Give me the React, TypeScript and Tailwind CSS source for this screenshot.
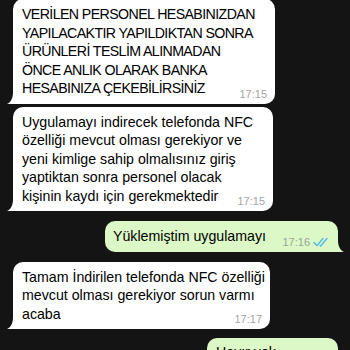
type Msg = {
  lines: string[];
  time: string;
  width: string;
  caps?: boolean;
};

function TailLeft() {
  return (
    <svg className="absolute left-[-6px] bottom-0" width="12" height="12" viewBox="0 0 12 12">
      <path d="M6 0 C6 6 4 10 0 12 L12 12 L12 0 Z" fill="#ffffff" />
    </svg>
  );
}

function TailRight() {
  return (
    <svg className="absolute right-[-6px] bottom-0" width="12" height="12" viewBox="0 0 12 12">
      <path d="M6 0 C6 6 8 10 12 12 L0 12 L0 0 Z" fill="#dcf8c6" />
    </svg>
  );
}

function Ticks() {
  return (
    <svg width="15" height="10" viewBox="0 0 15 10" fill="none" stroke="#4fb6ec" strokeWidth="1.3" strokeLinecap="round" strokeLinejoin="round">
      <path d="M1 5.5 L4 8.5 L10 1.5" />
      <path d="M7 8.5 L7.6 9 L14 1.5" />
    </svg>
  );
}

function Incoming({ msg, className }: { msg: Msg; className?: string }) {
  const last = msg.lines.length - 1;
  return (
    <div className={`relative self-start bg-white rounded-[10px] rounded-bl-[3px] pl-[9px] pr-[8px] py-[6px] ${msg.width} ${className ?? ""}`}>
      <TailLeft />
      <div className={`text-[14.2px] leading-[18.5px] text-black ${msg.caps ? "tracking-[-0.6px]" : ""}`}>
        {msg.lines.map((line, i) =>
          i === last ? (
            <div key={i} className="flex items-end justify-between whitespace-nowrap">
              <span>{line}</span>
              <span className="text-[11px] leading-[12px] mb-[-2px] text-[#a3a3a3] tracking-normal">{msg.time}</span>
            </div>
          ) : (
            <div key={i} className="whitespace-nowrap">
              {line}
            </div>
          )
        )}
      </div>
    </div>
  );
}

export default function App() {
  return (
    <div
      className="w-[350px] h-[350px] overflow-hidden bg-[#141414] flex flex-col pl-[13px] pr-[12px]"
      style={{ fontFamily: '"Liberation Sans", Arial, sans-serif' }}
    >
      {/* first bubble, top edge cut off by the screenshot */}
      <Incoming
        className="-mt-[1px]"
        msg={{
          caps: true,
          width: "w-[262px]",
          time: "17:15",
          lines: [
            "VERİLEN PERSONEL HESABINIZDAN",
            "YAPILACAKTIR YAPILDIKTAN SONRA",
            "ÜRÜNLERİ TESLİM ALINMADAN",
            "ÖNCE ANLIK OLARAK BANKA",
            "HESABINIZA ÇEKEBİLİRSİNİZ",
          ],
        }}
      />

      <Incoming
        className="mt-[3px]"
        msg={{
          width: "w-[260px]",
          time: "17:15",
          lines: [
            "Uygulamayı indirecek telefonda NFC",
            "özelliği mevcut olması gerekiyor ve",
            "yeni kimlige sahip olmalısınız giriş",
            "yaptiktan sonra personel olacak",
            "kişinin kaydı için gerekmektedir",
          ],
        }}
      />

      {/* outgoing */}
      <div className="relative self-end mt-[10px] w-[233px] bg-[#dcf8c6] rounded-[10px] rounded-br-[3px] pl-[8px] pr-[10px] py-[6px] flex items-end justify-between">
        <TailRight />
        <span className="text-[14.2px] leading-[18.5px] text-black whitespace-nowrap">Yüklemiştim uygulamayı</span>
        <span className="flex items-center gap-[3px] mb-[-2px]">
          <span className="text-[11px] leading-[12px] text-[#9aa597]">17:16</span>
          <Ticks />
        </span>
      </div>

      <Incoming
        className="mt-[10px]"
        msg={{
          width: "w-[257px]",
          time: "17:17",
          lines: ["Tamam İndirilen telefonda NFC özelliği", "mevcut olması gerekiyor sorun varmı", "acaba"],
        }}
      />

      {/* last bubble, cut off by the bottom edge */}
      <div className="relative self-end mt-[9px] w-[131px] bg-[#dcf8c6] rounded-[10px] pl-[9px] pr-[10px] pt-[2px] pb-[6px]">
        <span className="text-[14.2px] leading-[18.5px] text-black whitespace-nowrap">Hayır yok</span>
      </div>
    </div>
  );
}
